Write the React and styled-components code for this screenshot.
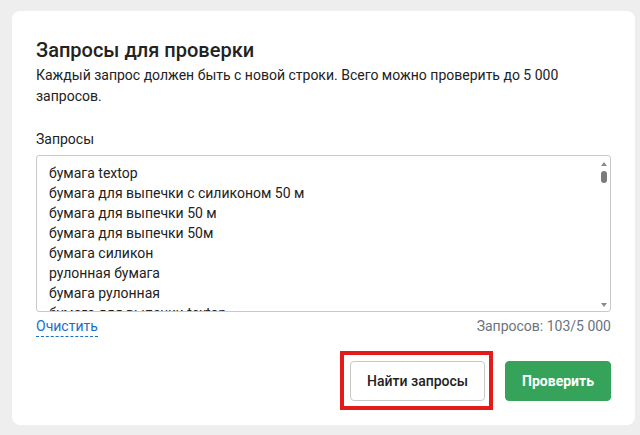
import styled, { createGlobalStyle } from "styled-components";

const GlobalStyle = createGlobalStyle`
  html, body {
    margin: 0;
    padding: 0;
    background: #eeeeee;
    font-family: Roboto, "Liberation Sans", sans-serif;
    color: #222;
  }
`;

const Page = styled.div`
  padding: 11px 0 0 12px;
  height: 435px;
  box-sizing: border-box;
  overflow: hidden;
`;

const Card = styled.div`
  width: 623px;
  height: 414px;
  box-sizing: border-box;
  background: #fff;
  border-radius: 8px;
  padding: 24px 24px 24px 24px;
  display: flex;
  flex-direction: column;
`;

const Title = styled.h2`
  margin: 0;
  font-size: 20px;
  line-height: 30px;
  font-weight: 500;
  color: #222;
`;

const Description = styled.p`
  margin: 0;
  font-size: 14px;
  line-height: 21px;
  color: #222;
`;

const Label = styled.label`
  display: block;
  margin-top: 22px;
  font-size: 14px;
  line-height: 20px;
  color: #222;
`;

const AreaWrap = styled.div`
  position: relative;
  margin-top: 6px;
`;

const QueryArea = styled.textarea`
  display: block;
  width: 100%;
  height: 157px;
  box-sizing: border-box;
  padding: 7px 12px;
  border: 1px solid #c9c9c9;
  border-radius: 3px;
  font-family: Roboto, "Liberation Sans", sans-serif;
  font-size: 14px;
  line-height: 20px;
  color: #222;
  resize: none;
  outline: none;
  overflow: hidden;
`;

const ScrollArrow = styled.div`
  position: absolute;
  right: 4px;
  ${(p) => (p.$down ? "bottom: 5px;" : "top: 7px;")}
  width: 0;
  height: 0;
  border-left: 3px solid transparent;
  border-right: 3px solid transparent;
  ${(p) => (p.$down ? "border-top: 4px solid #8a8a8a;" : "border-bottom: 4px solid #8a8a8a;")}
`;

const ScrollThumb = styled.div`
  position: absolute;
  right: 4px;
  top: 16px;
  width: 6px;
  height: 12px;
  border-radius: 3px;
  background: #7b7b7b;
`;

const Meta = styled.div`
  display: flex;
  justify-content: space-between;
  align-items: flex-start;
  margin-top: 4px;
  font-size: 14px;
  line-height: 20px;
`;

const ClearLink = styled.span`
  color: #1a6fc8;
  border-bottom: 1px dashed #1a6fc8;
  cursor: pointer;
`;

const Counter = styled.span`
  color: #6a7380;
`;

const Actions = styled.div`
  margin-top: auto;
  display: flex;
  justify-content: flex-end;
  gap: 20px;
`;

const Highlight = styled.div`
  position: relative;
  &::after {
    content: "";
    position: absolute;
    left: -10px;
    top: -10px;
    right: -8px;
    bottom: -9px;
    border: 4px solid #e31b1b;
    pointer-events: none;
  }
`;

const Button = styled.button`
  height: 40px;
  box-sizing: border-box;
  padding: 0 16px;
  border-radius: 4px;
  font-family: Roboto, "Liberation Sans", sans-serif;
  font-size: 14px;
  cursor: pointer;
  border: 1px solid ${(p) => (p.$primary ? "#35a45a" : "#c8c8c8")};
  background: ${(p) => (p.$primary ? "#35a45a" : "#fff")};
  color: ${(p) => (p.$primary ? "#fff" : "#222")};
  font-weight: ${(p) => (p.$primary ? 700 : 500)};
`;

const queries = [
  "бумага textop",
  "бумага для выпечки с силиконом 50 м",
  "бумага для выпечки 50 м",
  "бумага для выпечки 50м",
  "бумага силикон",
  "рулонная бумага",
  "бумага рулонная",
  "бумага для выпечки textop",
  "бумага для выпечки рулон",
  "пергамент для выпечки",
  "пергаментная бумага",
  "бумага пекарская",
  "бумага для запекания",
  "силиконовая бумага для выпечки",
  "бумага для выпечки силиконизированная",
  "бумага для духовки",
  "бумага для торта",
  "бумага для печенья",
  "бумага для пиццы",
  "бумага для хлеба",
];

export default function App() {
  return (
    <>
      <GlobalStyle />
      <Page>
        <Card>
          <Title>Запросы для проверки</Title>
          <Description>
            Каждый запрос должен быть с новой строки. Всего можно проверить до 5 000 запросов.
          </Description>
          <Label htmlFor="queries">Запросы</Label>
          <AreaWrap>
            <QueryArea id="queries" defaultValue={queries.join("\n")} />
            <ScrollArrow />
            <ScrollThumb />
            <ScrollArrow $down />
          </AreaWrap>
          <Meta>
            <ClearLink>Очистить</ClearLink>
            <Counter>Запросов: 103/5 000</Counter>
          </Meta>
          <Actions>
            <Highlight>
              <Button>Найти запросы</Button>
            </Highlight>
            <Button $primary>Проверить</Button>
          </Actions>
        </Card>
      </Page>
    </>
  );
}
